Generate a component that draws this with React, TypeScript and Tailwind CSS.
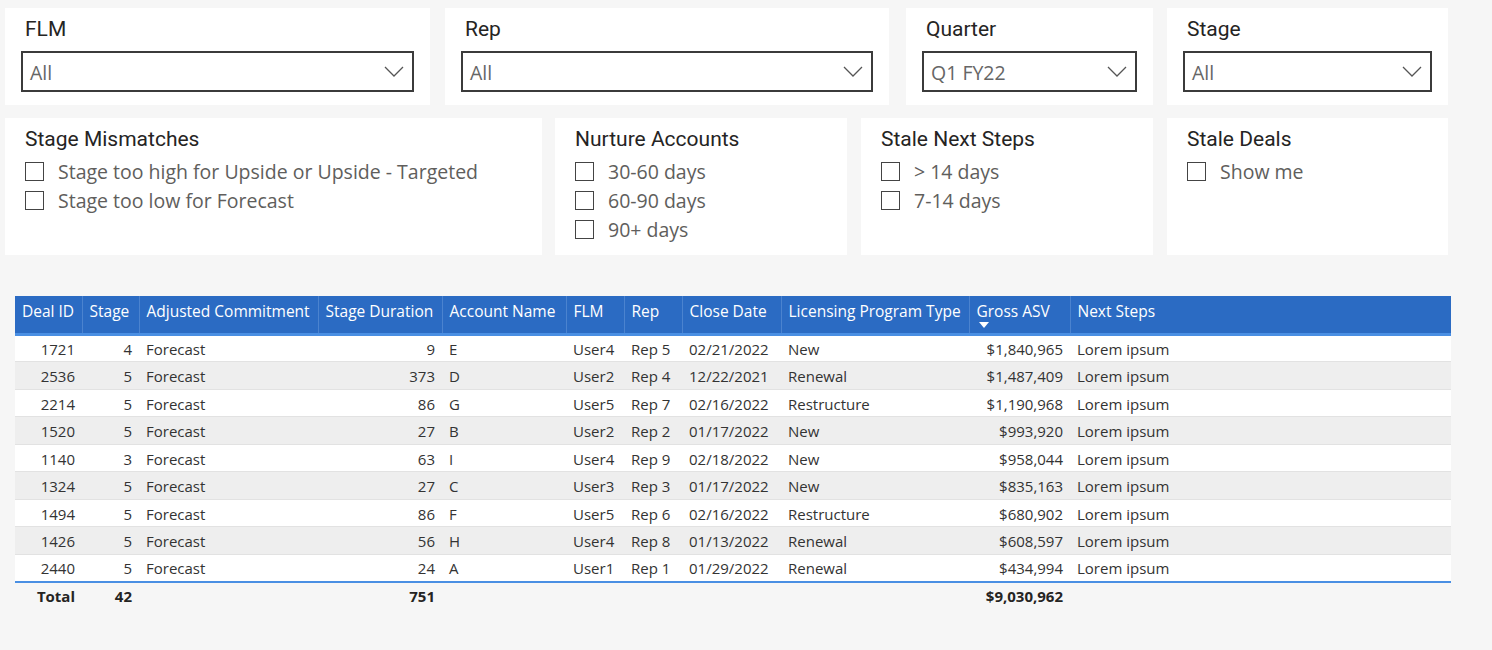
import React from 'react';

const SEGOE = "font-['Segoe_UI','Open_Sans',sans-serif]";
const DIN = "font-['DIN','Roboto',sans-serif]";

function Chevron() {
  return (
    <svg width="20" height="11" viewBox="0 0 20 11" className="shrink-0">
      <path d="M1 1 L10 10 L19 1" fill="none" stroke="#555" strokeWidth="1.3" />
    </svg>
  );
}

function Dropdown({ title, value, width }: { title: string; value: string; width: string }) {
  return (
    <div className={`${width} h-[97px] bg-white pt-[9px] px-[16px]`}>
      <div className={`${DIN} text-[21px] leading-[24px] text-[#252423] pl-[4px]`}>{title}</div>
      <div className="mt-[10px] h-[41px] border-2 border-[#3b3b3b] flex items-center justify-between pl-[7px] pr-[8px]">
        <span className={`${SEGOE} text-[19.5px] text-[#666] pt-[3px]`}>{value}</span>
        <Chevron />
      </div>
    </div>
  );
}

function CheckList({ title, items, width }: { title: string; items: string[]; width: string }) {
  return (
    <div className={`${width} h-[137px] bg-white pt-[9px] pl-[20px]`}>
      <div className={`${DIN} text-[21px] leading-[24px] text-[#252423]`}>{title}</div>
      <div className="mt-[6px] flex flex-col">
        {items.map((it) => (
          <div key={it} className="h-[29px] flex items-center">
            <span className="w-[19px] h-[19px] border border-[#444] bg-white shrink-0" />
            <span className={`${SEGOE} text-[19.5px] text-[#605e5c] ml-[14px]`}>{it}</span>
          </div>
        ))}
      </div>
    </div>
  );
}

const cols = [
  { name: 'Deal ID', w: 67, right: true },
  { name: 'Stage', w: 57, right: true },
  { name: 'Adjusted Commitment', w: 179, right: false },
  { name: 'Stage Duration', w: 124, right: true },
  { name: 'Account Name', w: 124, right: false },
  { name: 'FLM', w: 58, right: false },
  { name: 'Rep', w: 58, right: false },
  { name: 'Close Date', w: 99, right: false },
  { name: 'Licensing Program Type', w: 188, right: false },
  { name: 'Gross ASV', w: 101, right: true },
  { name: 'Next Steps', w: 381, right: false },
];

const rows: string[][] = [
  ['1721', '4', 'Forecast', '9', 'E', 'User4', 'Rep 5', '02/21/2022', 'New', '$1,840,965', 'Lorem ipsum'],
  ['2536', '5', 'Forecast', '373', 'D', 'User2', 'Rep 4', '12/22/2021', 'Renewal', '$1,487,409', 'Lorem ipsum'],
  ['2214', '5', 'Forecast', '86', 'G', 'User5', 'Rep 7', '02/16/2022', 'Restructure', '$1,190,968', 'Lorem ipsum'],
  ['1520', '5', 'Forecast', '27', 'B', 'User2', 'Rep 2', '01/17/2022', 'New', '$993,920', 'Lorem ipsum'],
  ['1140', '3', 'Forecast', '63', 'I', 'User4', 'Rep 9', '02/18/2022', 'New', '$958,044', 'Lorem ipsum'],
  ['1324', '5', 'Forecast', '27', 'C', 'User3', 'Rep 3', '01/17/2022', 'New', '$835,163', 'Lorem ipsum'],
  ['1494', '5', 'Forecast', '86', 'F', 'User5', 'Rep 6', '02/16/2022', 'Restructure', '$680,902', 'Lorem ipsum'],
  ['1426', '5', 'Forecast', '56', 'H', 'User4', 'Rep 8', '01/13/2022', 'Renewal', '$608,597', 'Lorem ipsum'],
  ['2440', '5', 'Forecast', '24', 'A', 'User1', 'Rep 1', '01/29/2022', 'Renewal', '$434,994', 'Lorem ipsum'],
];

const totals = ['Total', '42', '', '751', '', '', '', '', '', '$9,030,962', ''];

export default function App() {
  return (
    <div className={`w-[1492px] h-[650px] bg-[#f6f6f6] overflow-hidden ${SEGOE}`}>
      {/* slicers */}
      <div className="flex pl-[5px] pt-[8px]">
        <Dropdown title="FLM" value="All" width="w-[425px]" />
        <div className="w-[15px]" />
        <Dropdown title="Rep" value="All" width="w-[444px]" />
        <div className="w-[17px]" />
        <Dropdown title="Quarter" value="Q1 FY22" width="w-[247px]" />
        <div className="w-[14px]" />
        <Dropdown title="Stage" value="All" width="w-[281px]" />
      </div>
      <div className="flex pl-[5px] mt-[13px] gap-[13px]">
        <CheckList
          title="Stage Mismatches"
          items={['Stage too high for Upside or Upside - Targeted', 'Stage too low for Forecast']}
          width="w-[537px]"
        />
        <div className="flex gap-[14px]">
          <CheckList title="Nurture Accounts" items={['30-60 days', '60-90 days', '90+ days']} width="w-[292px]" />
          <CheckList title="Stale Next Steps" items={['> 14 days', '7-14 days']} width="w-[292px]" />
          <CheckList title="Stale Deals" items={['Show me']} width="w-[281px]" />
        </div>
      </div>

      {/* table */}
      <div className="ml-[15px] mt-[41px] w-[1436px]">
        <table className="table-fixed border-collapse w-full text-[15px]">
          <colgroup>
            {cols.map((c) => (
              <col key={c.name} style={{ width: c.w }} />
            ))}
          </colgroup>
          <thead>
            <tr className="bg-[#2b6bc3] h-[38px] border-b-[3px] border-[#4a8fe3]">
              {cols.map((c, i) => (
                <th
                  key={c.name}
                  className={`relative align-top text-left text-[15.5px] font-normal text-white px-[7px] pt-[4px] whitespace-nowrap ${
                    i < cols.length - 1 ? 'border-r border-[#4b83cf]' : ''
                  }`}
                >
                  {c.name}
                  {c.name === 'Gross ASV' && (
                    <svg width="10" height="6" viewBox="0 0 10 6" className="absolute left-[9px] top-[26px]">
                      <path d="M0 0 L10 0 L5 6 Z" fill="#fff" />
                    </svg>
                  )}
                </th>
              ))}
            </tr>
          </thead>
          <tbody>
            {rows.map((r, ri) => (
              <tr
                key={r[0]}
                className={`h-[27.5px] ${ri % 2 === 0 ? 'bg-white' : 'bg-[#eeeeee]'} ${
                  ri === rows.length - 1 ? 'border-b-2 border-[#4a8fe3]' : 'border-b border-[#e2e2e2]'
                }`}
              >
                {r.map((v, ci) => (
                  <td
                    key={ci}
                    className={`px-[7px] pt-[2px] text-[#333] whitespace-nowrap ${cols[ci].right ? 'text-right' : 'text-left'}`}
                  >
                    {v}
                  </td>
                ))}
              </tr>
            ))}
            <tr className="h-[28px]">
              {totals.map((v, ci) => (
                <td
                  key={ci}
                  className={`px-[7px] font-bold text-[#252423] whitespace-nowrap ${cols[ci].right ? 'text-right' : 'text-left'}`}
                >
                  {v}
                </td>
              ))}
            </tr>
          </tbody>
        </table>
      </div>
    </div>
  );
}
